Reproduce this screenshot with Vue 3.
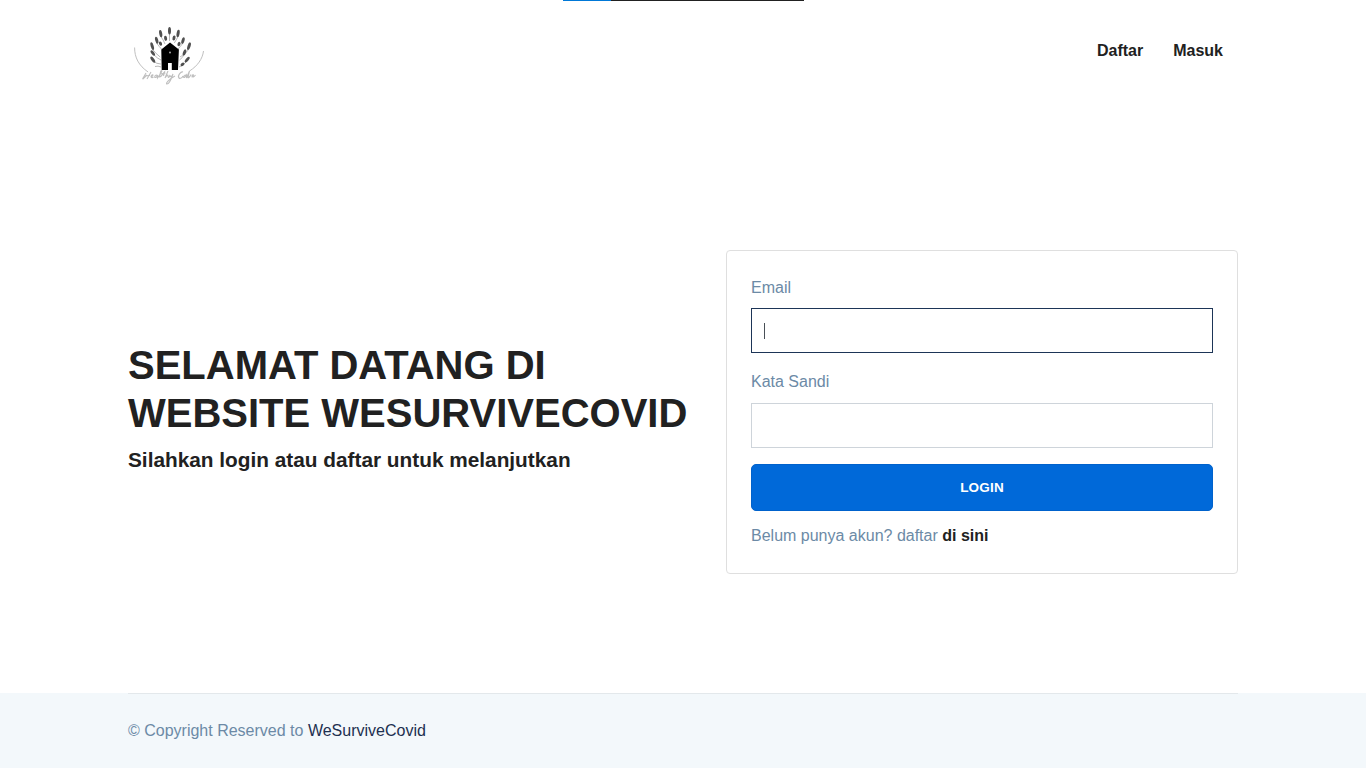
<script setup>
const leaves = [
  [45.5, 14.8, 3.7, 0],
  [36.7, 17.6, 3.7, -10],
  [54.1, 17.4, 3.7, 10],
  [32.7, 24.2, 3.6, -14],
  [59, 24.6, 3.4, 16],
  [41.6, 22.3, 2.6, -10],
  [50, 22, 2.6, 12],
  [28.2, 30.2, 4, -16],
  [65, 30.2, 4, 18],
  [36.5, 27.6, 2.2, -20],
  [55, 28, 2.2, 20],
  [28.8, 37, 3.2, -35],
  [60.5, 36.4, 3.2, 20],
  [28.8, 43.6, 3.6, -35],
  [63.2, 43.6, 3.4, 40],
  [58.5, 48.4, 2.2, 50],
]
</script>

<template>
  <div class="page">
    <div class="loader"><div class="loader-value"></div></div>
    <header class="container header">
      <svg class="logo" width="90" height="80" viewBox="0 0 90 80">
        <g fill="none" stroke="#9a9a9a" stroke-width=".7">
          <path d="M45.5 16v9M36.5 20q3 4 4.500 8M54.3 20q-2 4-4 7M32.5 27q3 4 5 6M59 27q-3 4-5 6M28.2 33q4 5 8 8M65 33q-3 5-9 8M29 38q5 5 8 6M60.500 38q-2 4-5 6M28.8 45q4 3 8 3M63 45q-4 5-8 6M31 50.500q3-1 6 .5" />
        </g>
        <g fill="#505050">
          <ellipse v-for="(l, i) in leaves" :key="i" :cx="l[0]" :cy="l[1]" rx="1.5" :ry="l[2]" :transform="`rotate(${l[3]} ${l[0]} ${l[1]})`" />
        </g>
        <path fill="#000" d="M46 26.5 37.3 33.500 37.700 54h6.300v-7h3.800v7h6.200l.9-20.500z" />
        <circle cx="46" cy="36.5" r=".9" fill="#bbb" />
        <g fill="none" stroke="#b8b8b8" stroke-width=".9">
          <path d="M10.6 31.5c0 10 4 18 13.5 24.5M79.5 35c-1 8-6 15-14 20" />
        </g>
        <g class="script" fill="none" stroke="#b8b8b8" stroke-width="1.1">
          <path d="M22 57c-2 4-4 6-3 6l4-4M27 56l-4 7M21 60l5-.5M26.5 61c3-1 3-3 1.5-2s-1 4 1.5 2M33 59c-3 0-3 4-.5 2l1-2v3l4-6c1-2-.5-2-1 0l-1 5c2 0 3-3 5-5l-1 4M36.5 58l5-1M44 55l-3 7c2-3 3-4 3-2s1 2 2-1q0 3 2 1l1-2c-2 6-4 10-6 10s2-5 8-8" />
          <path d="M59 56c-2-1-6 4-4 6 1 1 3 0 4-2M62 59c-3 0-3 4-1 2l1.5-2v3l3-7-1.5 6.5c1 1 3-3 3-3M67.500 61c3-1 2-3 1-2s0 4 3 0" />
        </g>
      </svg>
      <nav class="nav"><a>Daftar</a><a>Masuk</a></nav>
    </header>
    <main class="container main">
      <section class="intro">
        <h1>SELAMAT DATANG DI<br />WEBSITE WESURVIVECOVID</h1>
        <h2>Silahkan login atau daftar untuk melanjutkan</h2>
      </section>
      <form class="card" @submit.prevent>
        <label>Email</label>
        <div class="field focused"><span class="caret"></span></div>
        <label>Kata Sandi</label>
        <div class="field"></div>
        <button type="submit">LOGIN</button>
        <p>Belum punya akun? daftar <a>di sini</a></p>
      </form>
    </main>
    <footer class="footer">
      <div class="container copyright">© Copyright Reserved to <a>WeSurviveCovid</a></div>
    </footer>
  </div>
</template>

<style>
body { margin: 0; overflow: hidden; }
</style>

<style scoped>
.page {
  position: relative;
  display: flex;
  flex-direction: column;
  height: 768px;
  background: #fff;
  color: #6c8aa6;
  font: 16px/24px "Liberation Sans", Arial, sans-serif;
}
.loader { position: absolute; top: 0; left: 563px; width: 241px; height: 1px; background: #212121; }
.loader-value { width: 48px; height: 1px; background: #0078d7; }
.container { box-sizing: border-box; width: 1110px; margin-left: 128px; }
.header { display: flex; justify-content: space-between; height: 130px; }
.logo { margin: 16px 0 0 -4px; filter: blur(.5px); }
.script { opacity: .9; }
.nav { display: flex; gap: 30px; padding: 39px 15px 0 0; }
a { color: #212529; }
.nav a, .card a { color: #212121; font-weight: 700; }
.main { display: flex; height: 563px; align-items: flex-start; justify-content: space-between; }
.intro { padding-top: 211px; color: #212121; white-space: nowrap; }
h1 { margin: 0 0 10px; font-size: 40px; line-height: 48px; }
h2 { margin: 0; font-size: 20.8px; line-height: 25px; }
.card {
  box-sizing: border-box;
  width: 512px;
  height: 324px;
  margin-top: 120px;
  padding: 25px 24px 23px;
  border: 1px solid #dfdfdf;
  border-radius: 4px;
}
label { display: block; margin-bottom: 8px; }
.field { box-sizing: border-box; height: 45px; margin-bottom: 16px; border: 1px solid #ced4da; }
.focused { display: flex; align-items: center; margin-bottom: 17px; padding-left: 12px; border-color: #1d3557; }
.field + label { margin-bottom: 9px; }
.caret { width: 1px; height: 16px; background: #495057; }
button {
  display: block;
  width: 100%;
  height: 47px;
  margin: 0 0 13px;
  padding: 0;
  border: 1px solid #0062cc;
  border-radius: 5px;
  background: #0069d9;
  color: #fff;
  font: 700 13.5px/20px "Liberation Sans", Arial, sans-serif;
  letter-spacing: .2px;
}
p { margin: 0; }
.footer { height: 75px; background: #f3f8fb; }
.copyright { height: 75px; padding-top: 25px; border-top: 1px solid #e3e8eb; }
.copyright a { color: #1d3050; }
</style>
